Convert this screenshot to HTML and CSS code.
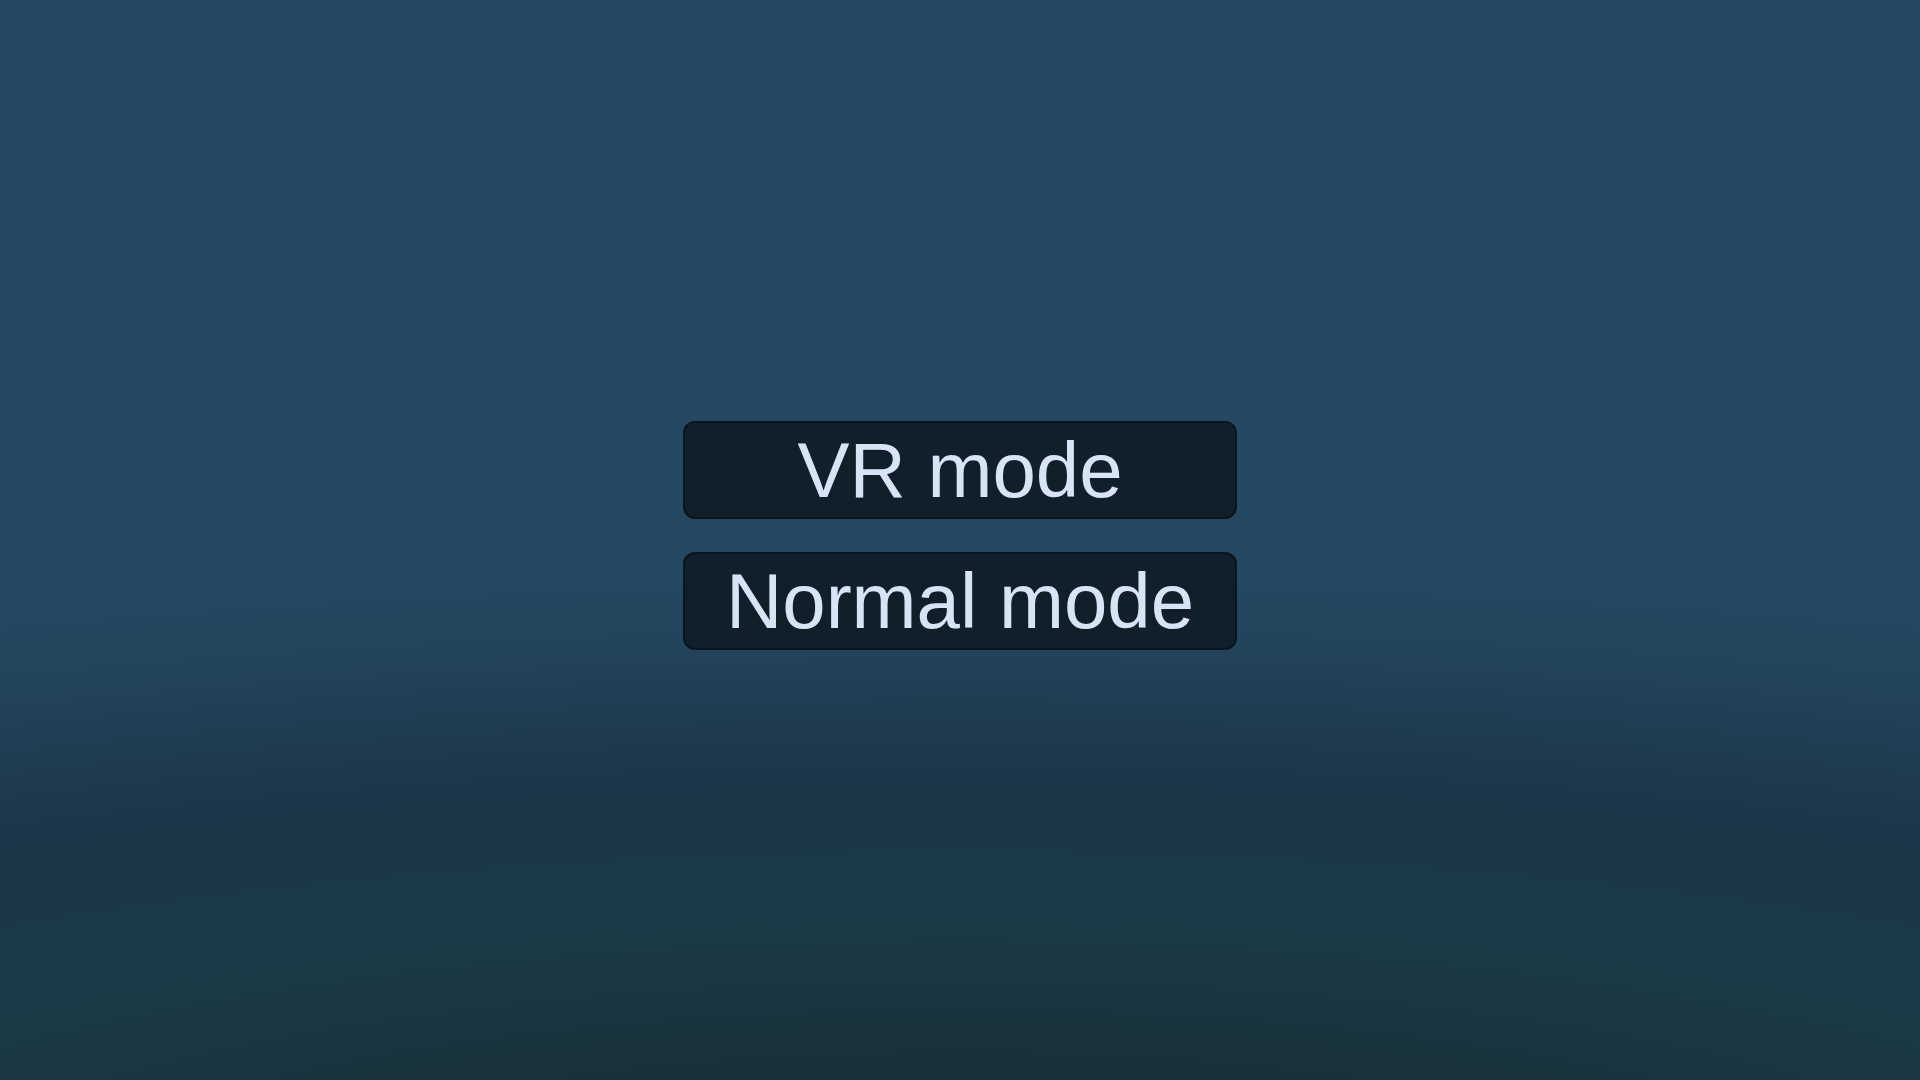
FILE: index.html
```html
<!DOCTYPE html>
<html lang="en">
<head>
<meta charset="utf-8">
<title>Mode select</title>
<link rel="stylesheet" href="styles.css">
</head>
<body>
<main class="scene">
  <div class="menu">
    <button class="mode-btn" type="button">VR mode</button>
    <button class="mode-btn" type="button">Normal mode</button>
  </div>
</main>
</body>
</html>
```

FILE: styles.css
```css
html, body {
  margin: 0;
  padding: 0;
  width: 100%;
  height: 100%;
  overflow: hidden;
}

body {
  font-family: "Liberation Sans", Arial, sans-serif;
  background: #244862;
}

.scene {
  width: 1920px;
  height: 1080px;
  display: flex;
  align-items: center;
  justify-content: center;
  background:
    radial-gradient(4090px 1000px at 960px 1250px,
      #172d35 0%,
      #182f38 17%,
      #1a3641 27%,
      #1b3b48 34%,
      #1b3846 40%,
      #1c3548 47%,
      #1f3b50 53%,
      #22435a 60%,
      #244862 68%,
      #244862 100%);
}

.menu {
  display: flex;
  flex-direction: column;
  gap: 33px;
  margin-top: -10px;
}

.mode-btn {
  width: 554px;
  height: 98px;
  box-sizing: border-box;
  background: #111f2b;
  border: 2px solid #0b151d;
  border-radius: 12px;
  color: #d4e6f5;
  font-family: "Liberation Sans", Arial, sans-serif;
  font-size: 78px;
  line-height: 1;
  padding: 0;
  display: flex;
  align-items: center;
  justify-content: center;
  cursor: pointer;
}
```
